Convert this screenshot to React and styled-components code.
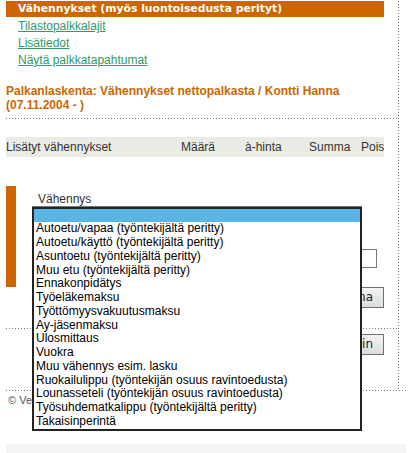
import React from "react";
import styled, { createGlobalStyle } from "styled-components";

const GlobalStyle = createGlobalStyle`
  body {
    margin: 0;
    background: #fff;
    font-family: "Liberation Sans", Arial, sans-serif;
    font-size: 12px;
    color: #333;
  }
`;

const dotsX = `repeating-linear-gradient(to right, #777 0 1px, transparent 1px 3px)`;

const Page = styled.div`
  padding-left: 6px;
`;

const Frame = styled.div`
  width: 400px;
  padding-bottom: 1px;
  background: ${dotsX} left bottom / 100% 1px no-repeat;
`;

const Main = styled.div`
  width: 393px;
  padding-bottom: 35px;
  background: linear-gradient(to bottom, #777 0 1px, transparent 1px 3px) right top / 1px 3px repeat-y;
`;

const Block = styled.div`
  width: 378px;
`;

const HeaderBar = styled.div`
  margin-top: 1px;
  height: 16px;
  line-height: 16px;
  padding-left: 12px;
  background: #cc6600;
  color: #fff;
  font-family: "DejaVu Sans", Verdana, sans-serif;
  font-weight: bold;
  font-size: 10.8px;
  white-space: nowrap;
`;

const LinkList = styled.div`
  padding: 1px 0 0 12px;
`;

const NavLink = styled.a`
  display: block;
  width: fit-content;
  line-height: 17px;
  color: #339966;
  text-decoration: underline;
`;

const Heading = styled.h2`
  margin: 16px 0 0;
  padding-bottom: 5px;
  font-size: 12px;
  font-weight: bold;
  color: #cc6600;
  line-height: 13.8px;
`;

const Rule = styled.div`
  height: 1px;
  width: ${(p) => p.$width || 392}px;
  margin-top: ${(p) => p.$top || 0}px;
  background: ${dotsX};
`;

const TableHead = styled.div`
  display: grid;
  grid-template-columns: 175px 64px 64px 52px auto;
  width: 378px;
  height: 20px;
  line-height: 20px;
  margin-top: 18px;
  background: #ebebe6;
  color: #333;
  white-space: nowrap;
  overflow: hidden;
`;

const FormBlock = styled.div`
  position: relative;
  box-sizing: border-box;
  width: 378px;
  height: 101px;
  margin-top: 29px;
  padding: 7px 0 0 22px;
  border-left: 10px solid #cc6600;
`;

const Label = styled.div`
  color: #333;
  line-height: 13.8px;
`;

const ClosedSelect = styled.div`
  box-sizing: border-box;
  width: 330px;
  height: 20px;
  margin-left: -6px;
  border: 1px solid #777;
`;

const InputRow = styled.div`
  display: flex;
  justify-content: flex-end;
  margin-top: 23px;
  padding-right: 7px;
`;

const TextInput = styled.div`
  box-sizing: border-box;
  width: 120px;
  height: 19px;
  border: 1px solid #777;
  background: #fff;
`;

const ListBox = styled.div`
  position: absolute;
  top: 21px;
  left: 16px;
  z-index: 10;
  box-sizing: border-box;
  width: 330px;
  height: 224px;
  border: 2px solid #222;
  background: #fff;
  overflow: hidden;
`;

const Option = styled.div`
  height: 13.75px;
  line-height: 13.75px;
  padding-left: 2px;
  color: #000;
  white-space: nowrap;
  background: ${(p) => (p.$selected ? "#5bb5e4" : "transparent")};
`;

const ButtonRow = styled.div`
  display: flex;
  justify-content: flex-end;
  width: 378px;
  margin-top: ${(p) => p.$top || 0}px;
`;

const Button = styled.button`
  box-sizing: border-box;
  height: 21px;
  padding: 0 10px;
  border: 1px solid #707070;
  border-radius: 0;
  background: linear-gradient(#f3f3f3, #dcdcdc);
  font-family: "DejaVu Sans", Verdana, sans-serif;
  font-size: 12px;
  color: #222;
`;

const Footer = styled.div`
  padding: 3px 0 0 2px;
  font-size: 11px;
  color: #555;
  line-height: 13px;
`;

const BottomBand = styled.div`
  width: 400px;
  height: 10px;
  margin-top: 37px;
  background: #f5f5f5;
`;

const options = [
  "",
  "Autoetu/vapaa (työntekijältä peritty)",
  "Autoetu/käyttö (työntekijältä peritty)",
  "Asuntoetu (työntekijältä peritty)",
  "Muu etu (työntekijältä peritty)",
  "Ennakonpidätys",
  "Työeläkemaksu",
  "Työttömyysvakuutusmaksu",
  "Ay-jäsenmaksu",
  "Ulosmittaus",
  "Vuokra",
  "Muu vähennys esim. lasku",
  "Ruokailulippu (työntekijän osuus ravintoedusta)",
  "Lounasseteli (työntekijän osuus ravintoedusta)",
  "Työsuhdematkalippu (työntekijältä peritty)",
  "Takaisinperintä",
];

const App = () => {
  return (
    <Page>
      <GlobalStyle />
      <Frame>
        <Main>
          <Block>
            <HeaderBar>Vähennykset (myös luontoisedusta perityt)</HeaderBar>
            <LinkList>
              <NavLink href="#">Tilastopalkkalajit</NavLink>
              <NavLink href="#">Lisätiedot</NavLink>
              <NavLink href="#">Näytä palkkatapahtumat</NavLink>
            </LinkList>
            <Heading>
              Palkanlaskenta: Vähennykset nettopalkasta / Kontti Hanna
              <br />
              (07.11.2004 - )
            </Heading>
          </Block>
          <Rule />

          <TableHead>
            <span>Lisätyt vähennykset</span>
            <span>Määrä</span>
            <span>à-hinta</span>
            <span>Summa</span>
            <span>Pois</span>
          </TableHead>

          <FormBlock>
            <Label>Vähennys</Label>
            <ClosedSelect />
            <InputRow>
              <TextInput />
            </InputRow>
            <ListBox>
              {options.map((o, i) => (
                <Option key={i} $selected={i === 0}>
                  {o || "\u00a0"}
                </Option>
              ))}
            </ListBox>
          </FormBlock>

          <ButtonRow>
            <Button>Tallenna</Button>
          </ButtonRow>
          <Rule $top={20} />
          <ButtonRow $top={5}>
            <Button>Palaa vähennyksiin</Button>
          </ButtonRow>
        </Main>
      </Frame>
      <Footer>© Verkkopalkka</Footer>
      <BottomBand />
    </Page>
  );
};

export default App;
